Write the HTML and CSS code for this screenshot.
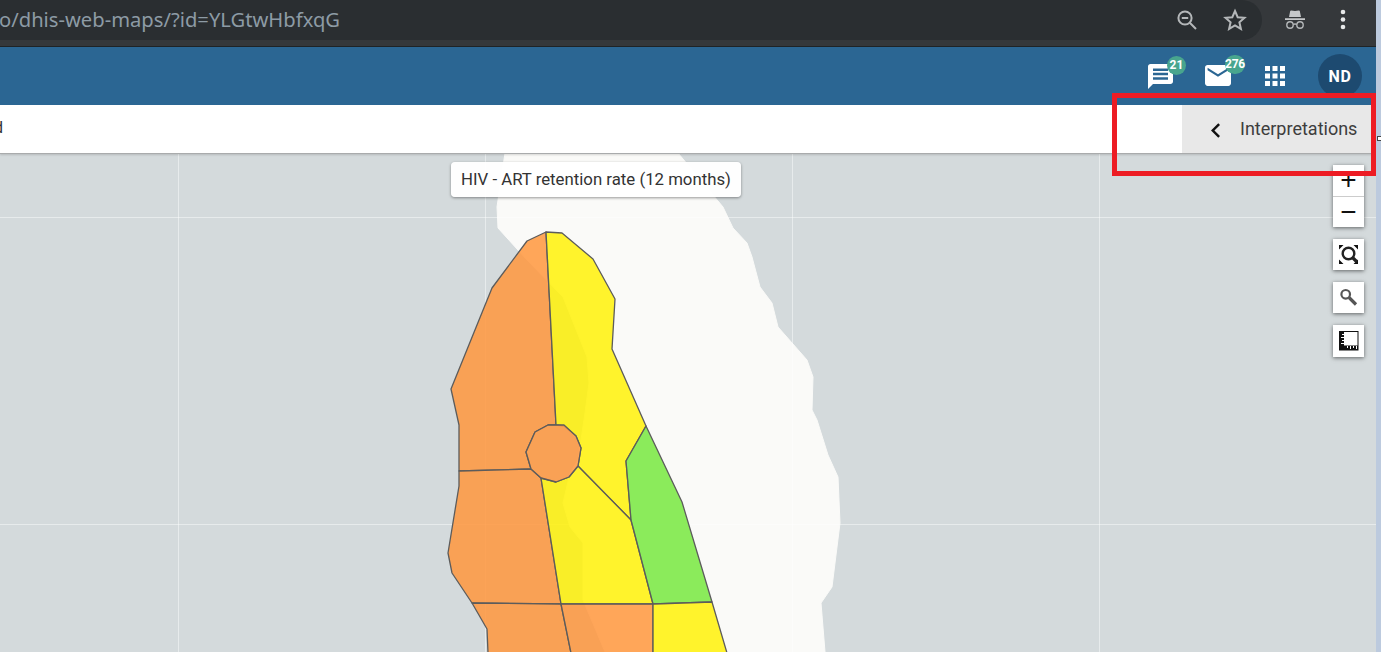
FILE: index.html
```html
<!DOCTYPE html>
<html lang="en">
<head>
<meta charset="utf-8">
<title>Maps</title>
<link rel="stylesheet" href="styles.css">
</head>
<body>
<div class="page">
  <div class="browser">
    <div class="omnibox">
      <span class="url">o/dhis-web-maps/?id=YLGtwHbfxqG</span>
      <div class="omni-icons">
        <svg class="ci" width="24" height="24" viewBox="0 0 24 24"><circle class="cl" cx="10" cy="10" r="6.6"/><path class="cl" d="M14.8 14.8l6.2 6.2M6.8 10h6.4"/></svg>
        <svg class="ci" width="24" height="24" viewBox="0 0 24 24"><path class="cl" d="M12 3l2.7 6.2 6.8.6-5.1 4.5 1.5 6.6L12 17.4l-5.9 3.5 1.5-6.6-5.1-4.5 6.8-.6z"/></svg>
      </div>
    </div>
    <div class="browser-right">
      <svg class="ci" width="22" height="24" viewBox="0 0 22 24"><path class="cf" d="M5 9l1.2-6q.2-.7 1-.6L11 3l3.8-.6q.8-.1 1 .6L17 9zM1 10.2h20v1.8H1z"/><circle class="cl thin" cx="6" cy="17" r="3.2"/><circle class="cl thin" cx="16" cy="17" r="3.2"/><path class="cl thin" d="M9.2 16.5q1.8-1 3.6 0"/></svg>
      <svg class="ci" width="6" height="22" viewBox="0 0 6 22"><circle class="dot" cx="3" cy="3" r="2.3"/><circle class="dot" cx="3" cy="10.5" r="2.3"/><circle class="dot" cx="3" cy="18" r="2.3"/></svg>
    </div>
  </div>

  <header class="header">
    <div class="hitem chat">
      <svg width="25" height="25" viewBox="2 2 20 20"><path class="wf" fill-rule="evenodd" d="M20 2H4c-1.1 0-2 .9-2 2v18l4-4h14c1.1 0 2-.9 2-2V4c0-1.100-.9-2-2-2zM6 5.500h12v2H6zM6 9h12v2H6zM6 12.500h12v2H6z"/></svg>
      <span class="badge b-chat">21</span>
    </div>
    <div class="hitem mail">
      <svg width="26" height="21" viewBox="2 4 20 16"><path class="wf" d="M20 4H4c-1.100 0-1.990.9-1.990 2L2 18c0 1.100.9 2 2 2h16c1.100 0 2-.9 2-2V6c0-1.100-.9-2-2-2zm0 4l-8 5-8-5V6l8 5 8-5v2z"/></svg>
      <span class="badge b-mail">276</span>
    </div>
    <div class="hitem apps">
      <svg width="20" height="20" viewBox="4 4 16 16"><path class="wf" d="M4 8h4V4H4v4zm6 12h4v-4h-4v4zm-6 0h4v-4H4v4zm0-6h4v-4H4v4zm6 0h4v-4h-4v4zm6-10v4h4V4h-4zm-6 4h4V4h-4v4zm6 6h4v-4h-4v4zm0 6h4v-4h-4v4z"/></svg>
    </div>
    <div class="avatar">ND</div>
  </header>

  <div class="subbar">
    <span class="clipped">d</span>
    <div class="interp">
      <svg width="9" height="15" viewBox="8 6 7.410 12"><path class="bf" d="M15.410 7.410L14 6l-6 6 6 6 1.410-1.410L10.830 12z"/></svg>
      <span class="interp-label">Interpretations</span>
    </div>
  </div>

  <main class="map">
    <svg class="mapsvg" width="1376" height="499" viewBox="0 153 1376 499">
      <path class="land" d="M505 153H678L723 207 733 228 747 243 752 257 760 287 772 303 778 327 807 360 813 377 812 410 817 420 828 455 838 477 840 523 832 587 821 603 825 652H605L597 633 583 600 583 543 570 527 563 503 570 473 578 460 585 413 589 383 587 357 563 297 527 260 498 228 497 207z"/>
      <path class="grid" d="M178.500 153V652M485.500 153V652M792.500 153V652M1099.500 153V652M0 217.500H1376M0 524.500H1376"/>
      <path class="reg orange" d="M546 232L527 241 492 288 451 389 459 425V471L531 469 526 452 535 432 548 425H556z"/>
      <path class="reg yellow" d="M546 232L562 233 593 259 615 299 612 349 646 426 626 461 631 520 578 466 581 448 576 436 564 426 556 425z"/>
      <path class="reg orange" d="M459 471L531 469 541 478 561 604 472 603 452 573 448 553 459 486z"/>
      <path class="reg yellow" d="M541 478L556 482 569 477 578 466 631 520 653 604 561 604z"/>
      <path class="reg green" d="M646 426L682 502 712 602 653 604 631 520 626 461z"/>
      <path class="reg orange" d="M556 425H564L576 436 581 448 578 466 569 477 556 482 541 478 531 469 526 452 535 432 548 425z"/>
      <path class="reg orange" d="M472 603L561 604 571 653H488L487 629z"/>
      <path class="reg orange" d="M561 604H653V653H571z"/>
      <path class="reg yellow" d="M653 604L712 602 727 653H653z"/>
    </svg>

    <div class="maptitle">HIV - ART retention rate (12 months)</div>

    <div class="controls">
      <div class="zoomgroup">
        <div class="zbtn">+</div>
        <div class="zbtn">−</div>
      </div>
      <div class="cbtn">
        <svg width="31" height="31" viewBox="0 0 31 31"><path class="k" d="M6 6h4.500L6 10.500zM25 6h-4.500L25 10.500zM6 25h4.500L6 20.500zM25 25h-4.500L25 20.500z"/><circle class="ks" cx="15.500" cy="14.500" r="5.800"/><path class="ks thick" d="M19.500 18.500l4.500 4.500"/></svg>
      </div>
      <div class="cbtn">
        <svg width="31" height="31" viewBox="0 0 31 31"><circle class="gs" cx="12.700" cy="12.300" r="4.300"/><path class="gs thick" d="M16 15.500l7 7"/></svg>
      </div>
      <div class="cbtn last">
        <svg width="31" height="32" viewBox="0 0 31 32"><path class="k" d="M6 6h19.500v19.500H6zM11 7v13.500h13.500V7z" fill-rule="evenodd"/><path class="wt" d="M9 9h2v1H9zM8 12h3v1H8zM9 15h2v1H9zM8 18h3v1H8zM14 21h1v2h-1zM17 21h1v3h-1zM20 21h1v2h-1zM23 21h1v3h-1z"/></svg>
      </div>
    </div>
  </main>

  <div class="annot" aria-hidden="true"></div>
</div>
<div class="handle" aria-hidden="true"></div>
</body>
</html>
```

FILE: styles.css
```css
* { box-sizing: border-box; }
html, body { margin: 0; height: 652px; overflow: hidden; }
body { background: #bccade; font-family: Roboto, "Liberation Sans", sans-serif; position: relative; }

.page { position: relative; width: 1376px; height: 652px; display: flex; flex-direction: column; overflow: hidden; }

/* browser chrome */
.browser { height: 47px; flex: none; background: #35383b; border-bottom: 1px solid #1f2326; display: flex; align-items: flex-start; }
.omnibox { width: 1262px; height: 40px; background: #2a2e31; border-radius: 0 20px 20px 0; display: flex; align-items: center; justify-content: space-between; padding-right: 15px; }
.url { font-family: "Noto Sans", "Open Sans", sans-serif; font-size: 20.200px; line-height: 40px; margin-top: -2px; color: #8d9ba5; margin-left: -1px; white-space: nowrap; }
.omni-icons { display: flex; gap: 24px; align-items: center; }
.ci { display: block; }
.cl { fill: none; stroke: #b4b7b9; stroke-width: 2; }
.cl.thin { stroke-width: 1.400; }
.cf { fill: #c6c8ca; }
.dot { fill: #e8e9ea; }
.browser-right { display: flex; align-items: center; gap: 34px; height: 40px; padding-left: 22px; }

/* dhis2 header */
.header { height: 58px; flex: none; background: #2b6693; display: flex; align-items: center; justify-content: flex-end; padding-right: 14px; }
.hitem { position: relative; display: flex; }
.chat { margin-right: 32px; }
.mail { margin-right: 34px; margin-top: -1px; }
.apps { margin-right: 33px; margin-top: -1px; }
.wf { fill: #fff; }
.badge { position: absolute; height: 19px; min-width: 19px; border-radius: 10px; background: #48a58e; color: #fff; font-size: 12px; font-weight: 700; line-height: 19px; text-align: center; }
.b-chat { left: 19px; top: -8px; }
.b-mail { left: 20px; top: -10px; width: 20px; letter-spacing: -0.3px; }
.avatar { width: 44px; height: 44px; border-radius: 50%; background: #1d4a70; color: #fff; font-size: 16px; font-weight: 700; letter-spacing: .6px; display: flex; align-items: center; justify-content: center; }

/* sub toolbar */
.subbar { height: 48px; flex: none; background: #fff; box-shadow: 0 1px 0 #a9abac, 0 2px 2px rgba(0,0,0,.15); display: flex; align-items: stretch; justify-content: space-between; position: relative; z-index: 2; }
.clipped { font-size: 16px; color: #333; margin-left: -6px; align-self: center; margin-top: -3px; }
.interp { width: 194px; background: #e8e8e8; display: flex; align-items: center; gap: 20px; padding-left: 29px; font-size: 18px; color: #3d3d3d; }
.interp svg { margin-top: 3px; flex: none; }
.interp-label { margin-top: -2px; }
.bf { fill: #111; }

/* map */
.map { flex: 1; position: relative; background: #d4dadc; overflow: hidden; }
.mapsvg { position: absolute; left: 0; top: 0; display: block; }
.land { fill: #fafaf8; stroke: #fafaf8; stroke-width: 1; stroke-linejoin: round; }
.grid { fill: none; stroke: #fff; stroke-opacity: .45; stroke-width: 1; }
.reg { stroke: #5c5c5c; stroke-width: 1.300; stroke-linejoin: round; fill-opacity: .85; }
.orange { fill: #ff963d; }
.yellow { fill: #fff108; }
.green { fill: #77e740; }

.maptitle { position: absolute; left: 451px; top: 9px; height: 35px; width: 290px; padding-bottom: 2px; background: rgba(255,255,255,.97); border-radius: 4px; box-shadow: 0 1px 3px rgba(0,0,0,.4); font-size: 16.800px; color: #333; display: flex; align-items: center; justify-content: center; white-space: nowrap; }

.controls { position: absolute; right: 12px; top: 12px; width: 31px; display: flex; flex-direction: column; gap: 12px; }
.zoomgroup { background: #fff; box-shadow: 0 1px 4px rgba(0,0,0,.55); display: flex; flex-direction: column; }
.zbtn { height: 31px; font-family: "Liberation Sans", sans-serif; font-size: 28px; line-height: 29px; text-align: center; color: #111; }
.zbtn + .zbtn { border-top: 1px solid #ccc; }
.cbtn { height: 31px; background: #fff; box-shadow: 0 1px 4px rgba(0,0,0,.55); }
.cbtn.last { height: 32px; }
.cbtn svg { display: block; }
.k { fill: #111; }
.ks { fill: none; stroke: #222; stroke-width: 2.400; }
.gs { fill: none; stroke: #555; stroke-width: 2.200; }
.thick { stroke-width: 3.200; }
.wt { fill: #fff; }

/* red annotation and its handle */
.annot { position: absolute; left: 1112px; top: 93px; width: 264px; height: 83px; border: 5px solid #ed1c24; z-index: 5; }
.handle { position: absolute; left: 1377px; top: 136px; width: 5px; height: 5px; background: #fff; border: 1px solid #444; }
```
